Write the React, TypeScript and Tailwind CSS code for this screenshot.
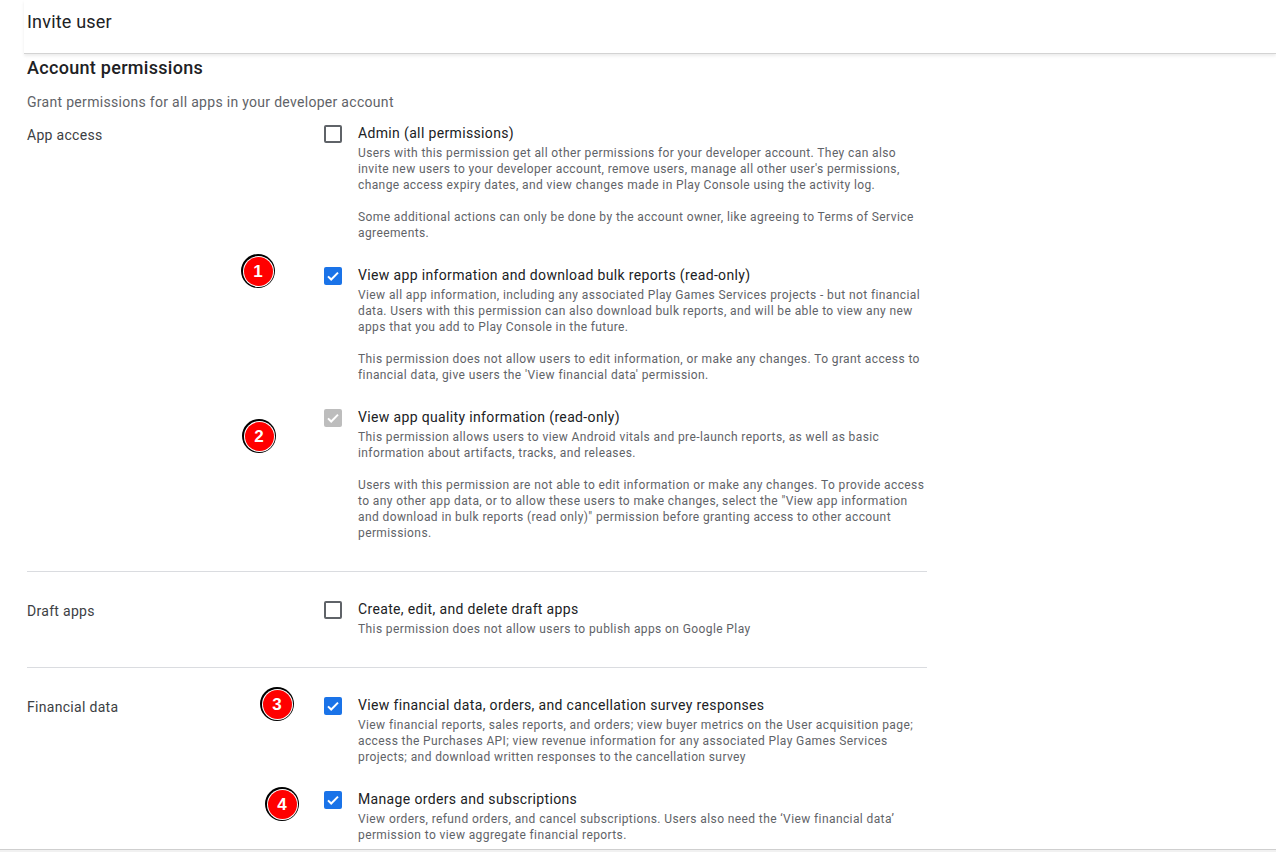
import React from 'react';

type Perm = {
  title: string;
  state: 'off' | 'on' | 'disabled';
  paras: string[][];
};

type Section = {
  label: string;
  perms: Perm[];
};

const sections: Section[] = [
  {
    label: 'App access',
    perms: [
      {
        title: 'Admin (all permissions)',
        state: 'off',
        paras: [
          [
            'Users with this permission get all other permissions for your developer account. They can also',
            "invite new users to your developer account, remove users, manage all other user's permissions,",
            'change access expiry dates, and view changes made in Play Console using the activity log.',
          ],
          [
            'Some additional actions can only be done by the account owner, like agreeing to Terms of Service',
            'agreements.',
          ],
        ],
      },
      {
        title: 'View app information and download bulk reports (read-only)',
        state: 'on',
        paras: [
          [
            'View all app information, including any associated Play Games Services projects - but not financial',
            'data. Users with this permission can also download bulk reports, and will be able to view any new',
            'apps that you add to Play Console in the future.',
          ],
          [
            'This permission does not allow users to edit information, or make any changes. To grant access to',
            "financial data, give users the 'View financial data' permission.",
          ],
        ],
      },
      {
        title: 'View app quality information (read-only)',
        state: 'disabled',
        paras: [
          [
            'This permission allows users to view Android vitals and pre-launch reports, as well as basic',
            'information about artifacts, tracks, and releases.',
          ],
          [
            'Users with this permission are not able to edit information or make any changes. To provide access',
            'to any other app data, or to allow these users to make changes, select the "View app information',
            'and download in bulk reports (read only)" permission before granting access to other account',
            'permissions.',
          ],
        ],
      },
    ],
  },
  {
    label: 'Draft apps',
    perms: [
      {
        title: 'Create, edit, and delete draft apps',
        state: 'off',
        paras: [['This permission does not allow users to publish apps on Google Play']],
      },
    ],
  },
  {
    label: 'Financial data',
    perms: [
      {
        title: 'View financial data, orders, and cancellation survey responses',
        state: 'on',
        paras: [
          [
            'View financial reports, sales reports, and orders; view buyer metrics on the User acquisition page;',
            'access the Purchases API; view revenue information for any associated Play Games Services',
            'projects; and download written responses to the cancellation survey',
          ],
        ],
      },
      {
        title: 'Manage orders and subscriptions',
        state: 'on',
        paras: [
          [
            'View orders, refund orders, and cancel subscriptions. Users also need the \u2018View financial data\u2019',
            'permission to view aggregate financial reports.',
          ],
        ],
      },
    ],
  },
];

// numbered callouts drawn over the screenshot
const badges = [
  { n: 1, className: 'left-[241px] top-[254px]' },
  { n: 2, className: 'left-[242px] top-[419px]' },
  { n: 3, className: 'left-[260px] top-[687px]' },
  { n: 4, className: 'left-[265px] top-[787px]' },
];

const Checkbox: React.FC<{ state: Perm['state'] }> = ({ state }) => {
  if (state === 'off') {
    return <div className="w-[18px] h-[18px] rounded-[2px] border-2 border-[#5f6368] bg-white" />;
  }
  return (
    <div
      className={`w-[18px] h-[18px] rounded-[2px] flex items-center justify-center ${
        state === 'on' ? 'bg-[#1a73e8]' : 'bg-[#bdbdbd]'
      }`}
    >
      <svg width="16" height="16" viewBox="0 0 24 24" fill="none">
        <path d="M4.5 12.5l4.8 4.8L19.5 7" stroke="white" strokeWidth="3" />
      </svg>
    </div>
  );
};

export default function App() {
  return (
    <div
      className="relative h-[852px] w-full bg-white overflow-hidden flex flex-col text-[#202124] tracking-[0.3px]"
      style={{ fontFamily: 'Roboto, "Liberation Sans", sans-serif' }}
    >
      <header className="ml-[24px] h-[54px] shrink-0 border-b border-[#d3d3d3] shadow-[0_2px_3px_rgba(0,0,0,0.08)] pl-[3px] pt-[12px]">
        <h1 className="text-[18px] leading-[20px] text-[#202124] tracking-[0.2px]">Invite user</h1>
      </header>

      <main className="flex-1 overflow-hidden pl-[27px]">
        <h2 className="text-[18px] leading-[28px] font-medium tracking-[0.3px]">Account permissions</h2>
        <p className="mt-[10px] text-[14px] leading-[20px] text-[#5f6368]">
          Grant permissions for all apps in your developer account
        </p>

        <div className="mt-[11px] w-[900px]">
          {sections.map((section, i) => (
            <div
              key={section.label}
              className={`flex pb-[30px] ${i > 0 ? 'pt-[27px]' : ''} ${
                i < sections.length - 1 ? 'border-b border-[#dadce0]' : ''
              }`}
            >
              <div className="w-[297px] shrink-0 pt-[2px] text-[14px] leading-[20px] text-[#3c4043]">
                {section.label}
              </div>
              <div className="flex flex-col gap-6">
                {section.perms.map((perm) => (
                  <div key={perm.title} className="flex gap-4">
                    <div className="pt-[2px]">
                      <Checkbox state={perm.state} />
                    </div>
                    <div>
                      <div className="text-[14px] leading-[20px] text-[#202124] tracking-[0.35px]">
                        {perm.title}
                      </div>
                      <div className="mt-[2px] flex flex-col gap-4 text-[12px] leading-[16px] text-[#5f6368] tracking-[0.4px]">
                        {perm.paras.map((lines, j) => (
                          <p key={j}>
                            {lines.map((line) => (
                              <span key={line} className="block whitespace-nowrap">
                                {line}
                              </span>
                            ))}
                          </p>
                        ))}
                      </div>
                    </div>
                  </div>
                ))}
              </div>
            </div>
          ))}
        </div>
      </main>

      <footer className="h-[3px] shrink-0 border-t border-[#cfcfcf] bg-[#f1f1f1]" />

      {badges.map((b) => (
        <div
          key={b.n}
          className={`absolute ${b.className} w-[34px] h-[34px] rounded-full bg-black p-[1.5px]`}
        >
          <div className="w-full h-full rounded-full bg-white p-[1px]">
            <div
              className="w-full h-full rounded-full bg-[#ff0000] flex items-center justify-center text-white text-[17px] font-bold leading-none tracking-normal"
              style={{ fontFamily: '"Liberation Sans", Arial, sans-serif' }}
            >
              {b.n}
            </div>
          </div>
        </div>
      ))}
    </div>
  );
}
